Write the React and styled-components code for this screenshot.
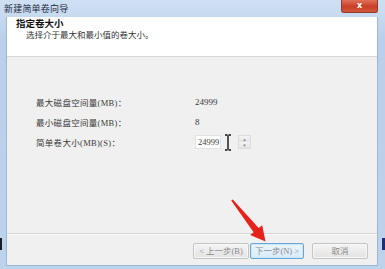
import React from 'react';
import styled, { createGlobalStyle } from 'styled-components';

const GlobalStyle = createGlobalStyle`
    html, body {
        margin: 0;
        padding: 0;
        background: #b9d0ea;
    }
    body {
        font-family: "Liberation Serif", "Noto Sans CJK SC", serif;
    }
`;

const rows = [
    { label: '最大磁盘空间量(MB)：', value: '24999' },
    { label: '最小磁盘空间量(MB)：', value: '8' },
];

export default function App() {
    return (
        <Window>
            <GlobalStyle />
            <TitleBar>
                <TitleText>新建简单卷向导</TitleText>
                <CloseButton>x</CloseButton>
            </TitleBar>
            <Body>
                <Header>
                    <HeaderTitle>指定卷大小</HeaderTitle>
                    <HeaderSub>选择介于最大和最小值的卷大小。</HeaderSub>
                </Header>
                <Content>
                    <Fields>
                        {rows.map((r) => (
                            <React.Fragment key={r.label}>
                                <Label>{r.label}</Label>
                                <Value>{r.value}</Value>
                            </React.Fragment>
                        ))}
                        <Label>简单卷大小(MB)(S)：</Label>
                        <InputRow>
                            <NumberBox>24999</NumberBox>
                            <IBeam width="8" height="17" viewBox="0 0 8 17">
                                <path d="M1 1h2.5M4.5 1H7M4 1.5v14M1 16h2.5M4.5 16H7" stroke="#111" strokeWidth="1.4" fill="none" />
                            </IBeam>
                            <Spinner>
                                <SpinHalf>▴</SpinHalf>
                                <SpinHalf>▾</SpinHalf>
                            </Spinner>
                        </InputRow>
                    </Fields>
                </Content>
                <Footer>
                    <Button>&lt; 上一步(B)</Button>
                    <Button $primary>下一步(N) &gt;</Button>
                    <Button $gap>取消</Button>
                </Footer>
            </Body>
            <EdgeMark $side="left" />
            <EdgeMark $side="right" />
            <Arrow width="50" height="50" viewBox="225 195 50 50">
                <polygon
                    points="231.2,200.6 253.6,232.3 250.2,235 265.5,241.5 262.2,225.2 258.7,228.1 232.8,199.4"
                    fill="#e8221b"
                />
            </Arrow>
        </Window>
    );
}

// STYLES
const Window = styled.div`
    position: relative;
    width: 385px;
    height: 269px;
    display: flex;
    flex-direction: column;
    background: linear-gradient(#cfe0f4, #b9d0ea 40px, #bcd3ec);
    overflow: hidden;
`;

const TitleBar = styled.div`
    height: 17px;
    display: flex;
    align-items: flex-start;
    justify-content: space-between;
    padding: 0 7px 0 4px;
`;

const TitleText = styled.div`
    font-size: 9px;
    line-height: 18px;
    color: #1c2a3c;
    letter-spacing: 0.2px;
`;

const CloseButton = styled.div`
    width: 35px;
    height: 12px;
    border-radius: 0 0 3px 3px;
    background: linear-gradient(#e0705a, #c83e26 55%, #d25a3e);
    border: 1px solid #8e3a2e;
    border-top: none;
    color: #fff;
    font-family: "DejaVu Sans", sans-serif;
    font-weight: bold;
    font-size: 8px;
    line-height: 11px;
    text-align: center;
`;

const Body = styled.div`
    flex: 1;
    display: flex;
    flex-direction: column;
    margin: 0 7px 3px 6px;
    background: #f0f0f0;
    border: 1px solid #9fb6d2;
    border-top: none;
`;

const Header = styled.div`
    height: 40px;
    background: #fff;
    border-bottom: 1px solid #d8d8d8;
    box-sizing: border-box;
    padding: 2px 0 0 9px;
`;

const HeaderTitle = styled.div`
    font-size: 9.5px;
    font-weight: bold;
    line-height: 11px;
    color: #111;
`;

const HeaderSub = styled.div`
    font-size: 8.5px;
    line-height: 11px;
    color: #333;
    padding-left: 10px;
`;

const Content = styled.div`
    flex: 1;
    padding: 35px 0 0 29px;
`;

const Fields = styled.div`
    display: grid;
    grid-template-columns: 159px auto;
    grid-auto-rows: 20px;
    align-items: center;
    font-size: 8.5px;
    color: #3a3a3a;
`;

const Label = styled.div`
    letter-spacing: 0.3px;
`;

const Value = styled.div`
    font-size: 9px;
`;

const InputRow = styled.div`
    display: flex;
    align-items: center;
`;

const NumberBox = styled.div`
    width: 26px;
    height: 14px;
    box-sizing: border-box;
    background: #fff;
    border: 1px solid #e2e2e2;
    font-size: 8.5px;
    line-height: 12px;
    padding-left: 2px;
`;

const IBeam = styled.svg`
    margin: 0 6px 0 3px;
`;

const Spinner = styled.div`
    width: 13px;
    height: 14px;
    display: flex;
    flex-direction: column;
    border: 1px solid #dcdcdc;
    box-sizing: border-box;
`;

const SpinHalf = styled.div`
    flex: 1;
    background: linear-gradient(#f4f4f4, #e4e4e4);
    font-family: "DejaVu Sans", sans-serif;
    font-size: 5px;
    line-height: 6px;
    color: #888;
    text-align: center;
`;

const Footer = styled.div`
    height: 32px;
    border-top: 1px solid #d6d6d6;
    box-shadow: inset 0 1px 0 #fbfbfb;
    display: flex;
    justify-content: flex-end;
    align-items: flex-start;
    padding: 9px 9px 0 0;
    box-sizing: border-box;
`;

const Button = styled.div`
    width: ${(p) => (p.$primary ? '54px' : '56px')};
    height: 16px;
    box-sizing: border-box;
    margin-left: ${(p) => (p.$gap ? '8px' : '1px')};
    border: 1px solid ${(p) => (p.$primary ? '#6aa7d6' : '#c4c4c4')};
    border-radius: 2px;
    background: ${(p) => (p.$primary ? 'linear-gradient(#eaf5fd, #d8ecfa)' : 'linear-gradient(#f4f4f4, #e3e3e3)')};
    box-shadow: inset 0 0 0 1px ${(p) => (p.$primary ? '#cbe6f8' : '#f8f8f8')};
    font-size: 8.5px;
    line-height: 14px;
    color: #8a8a8a;
    text-align: center;
    white-space: nowrap;
`;

const EdgeMark = styled.div`
    position: absolute;
    top: 238px;
    ${(p) => (p.$side === 'left' ? 'left: 0;' : 'right: 0;')}
    width: ${(p) => (p.$side === 'left' ? '2px' : '3px')};
    height: 12px;
    background: ${(p) => (p.$side === 'left' ? '#1a1a28' : '#1c2e7a')};
`;

const Arrow = styled.svg`
    position: absolute;
    left: 225px;
    top: 195px;
`;
